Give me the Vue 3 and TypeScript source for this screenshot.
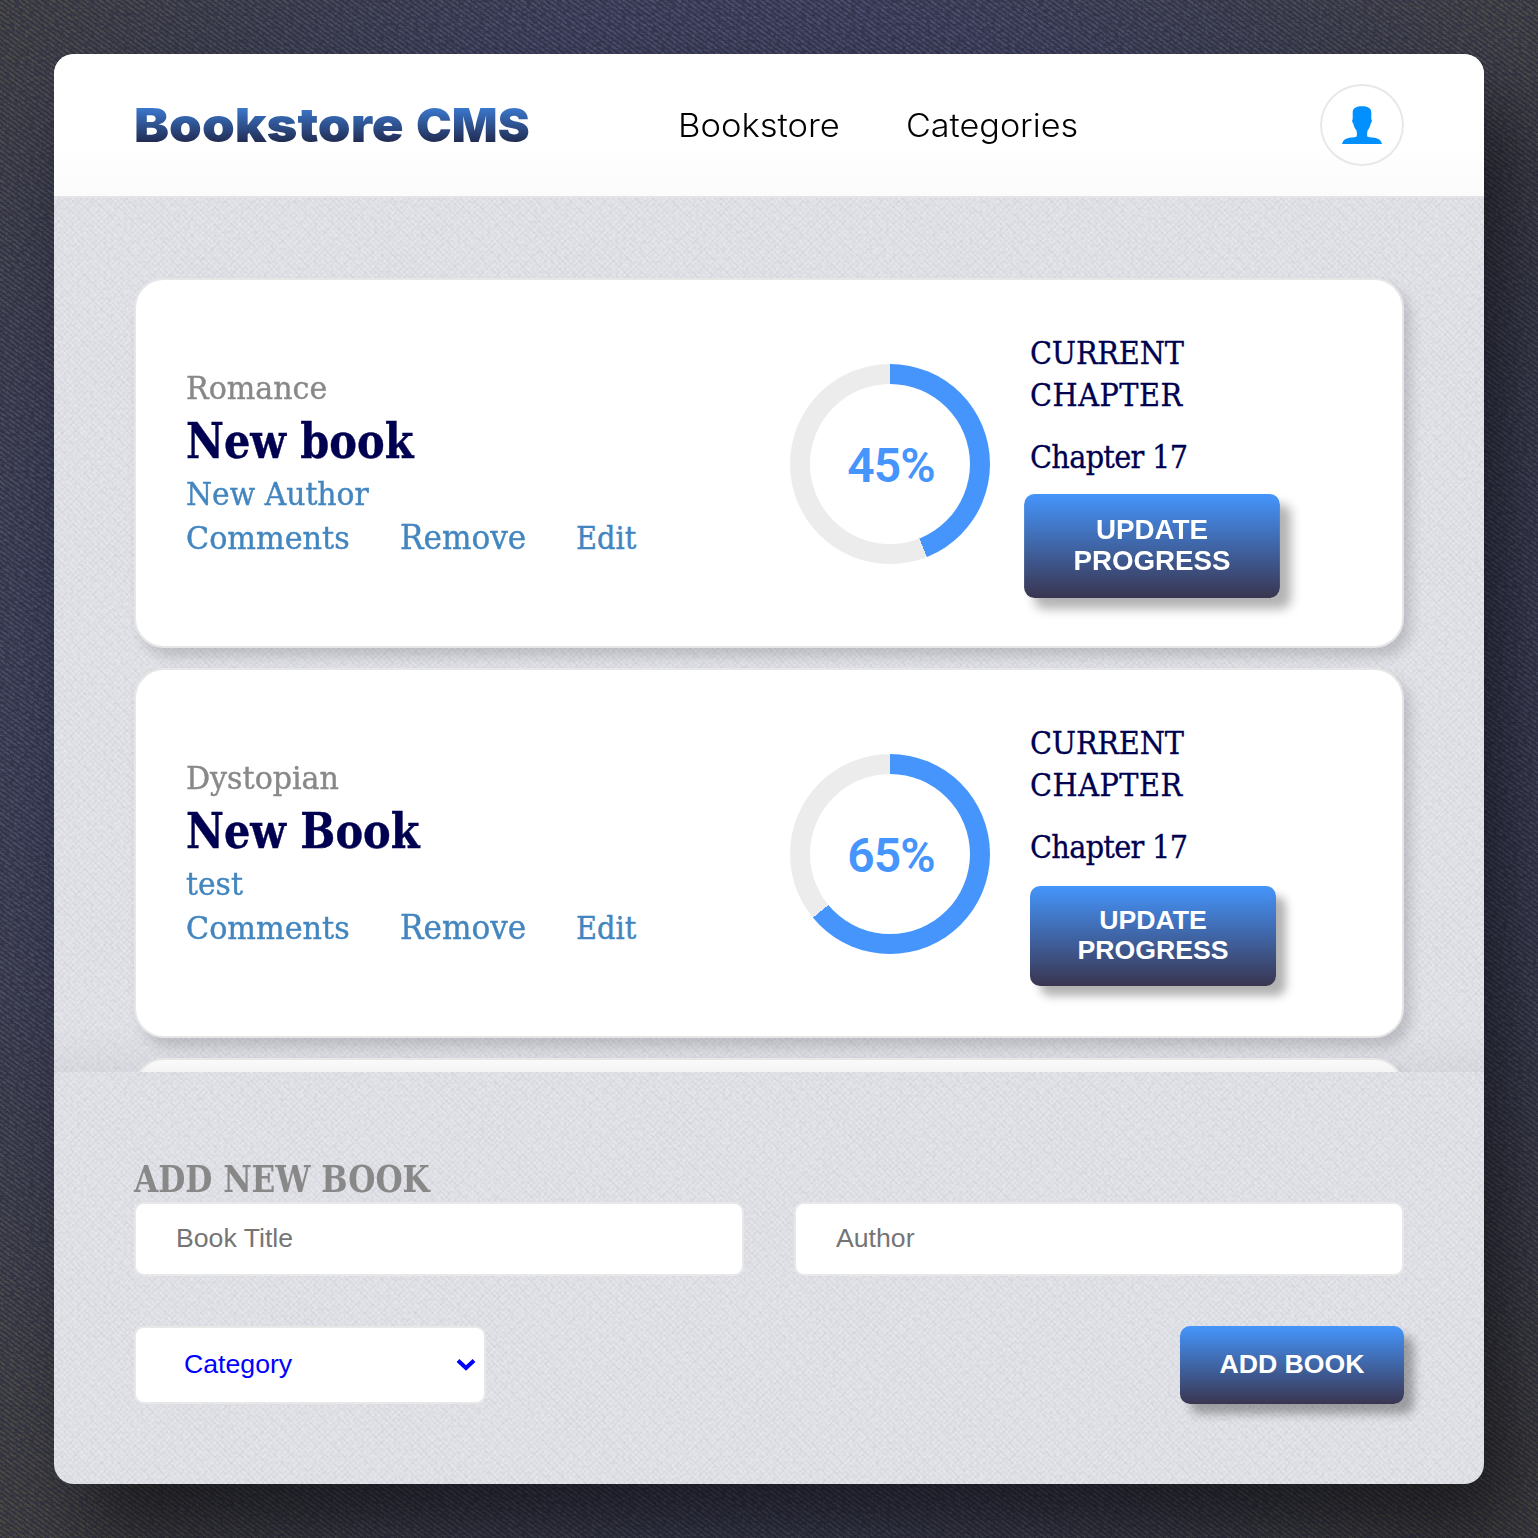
<script setup lang="ts">
interface Book {
  category: string
  title: string
  author: string
  progress: number
  chapter: string
  active: boolean
}

const books: Book[] = [
  { category: 'Romance', title: 'New book', author: 'New Author', progress: 45, chapter: 'Chapter 17', active: true },
  { category: 'Dystopian', title: 'New Book', author: 'test', progress: 65, chapter: 'Chapter 17', active: false },
]

const ring = (progress: number): string =>
  `conic-gradient(#4595fc ${progress - 1}%, #ececec ${progress - 1}%)`
</script>

<template>
  <div class="page">
    <main class="panel">
      <header class="header">
        <h1 class="logo"><span class="logo-name">Bookstore</span> <span class="logo-kind">CMS</span></h1>
        <nav class="nav">
          <a class="link-books">Bookstore</a>
          <a class="link-cats">Categories</a>
        </nav>
        <button class="avatar" aria-label="Profile">
          <svg width="40" height="38" viewBox="0 0 40 38">
            <path
              fill="#0290ff"
              d="M20 .3c5.400 0 9.300 1.600 9.300 6.200v6.700c1 .6.600 3.300-.5 4.100-.5 3-1.600 5.200-3.200 7.300-.5 2.200-.6 4.300-.3 6 2.400 1.300 7 .9 9.800 1.800 2.700.9 4.400 2.800 4.900 5.600H0c.6-2.800 2.200-4.700 4.900-5.600 2.800-.9 7.400-.5 9.800-1.800.3-1.700.3-3.800-.2-6-1.700-2.100-2.800-4.300-3.300-7.300-1.100-.8-1.500-3.500-.5-4.100V6.500C10.700 1.900 14.600.3 20 .3z"
            />
          </svg>
        </button>
      </header>

      <section class="list">
        <article v-for="book in books" :key="book.title" class="card">
          <div class="info">
            <span class="category">{{ book.category }}</span>
            <h2 class="title">{{ book.title }}</h2>
            <span class="author">{{ book.author }}</span>
            <div class="actions">
              <span class="comments">Comments</span>
              <span class="remove">Remove</span>
              <span class="edit">Edit</span>
            </div>
          </div>
          <div class="ring" :style="{ background: ring(book.progress) }">
            <div class="hole"><span>{{ book.progress }}%</span></div>
          </div>
          <div class="chapter">
            <p class="label">CURRENT<br /><span>CHAPTER</span></p>
            <p class="current">{{ book.chapter }}</p>
            <button class="btn update" :class="{ active: book.active }">UPDATE<br />PROGRESS</button>
          </div>
        </article>
        <article class="card"></article>
      </section>

      <section class="form">
        <h3 class="heading"><span>ADD NEW BOOK</span></h3>
        <div class="row">
          <input type="text" placeholder="Book Title" />
          <input type="text" placeholder="Author" />
        </div>
        <div class="row last">
          <div class="select">
            <span>Category</span>
            <svg width="20" height="14" viewBox="0 0 20 14">
              <path d="M2 2.500 10 10l8-7.500" fill="none" stroke="#00f" stroke-width="4" />
            </svg>
          </div>
          <button class="btn add">ADD BOOK</button>
        </div>
      </section>
    </main>
  </div>
</template>

<style>
body {
  margin: 0;
  background: #23242e;
}
</style>

<style scoped>
* {
  box-sizing: border-box;
}

.page {
  width: 1538px;
  height: 1538px;
  padding: 54px;
  overflow: hidden;
  font-family: 'DejaVu Serif Condensed', 'DejaVu Serif', serif;
  font-stretch: condensed;
  background:
    url("data:image/svg+xml,%3Csvg xmlns='http://www.w3.org/2000/svg' width='512' height='512'%3E%3Cfilter id='n'%3E%3CfeTurbulence type='fractalNoise' baseFrequency='.2 .3' numOctaves='2' seed='4' stitchTiles='stitch'/%3E%3CfeColorMatrix values='0 0 0 0 .03 0 0 0 0 .03 0 0 0 0 .06 1.7 0 0 0 -.58'/%3E%3C/filter%3E%3Crect width='512' height='512' filter='url(%23n)'/%3E%3C/svg%3E"),
    repeating-linear-gradient(36deg, rgba(0, 0, 0, 0.2) 0 1.500px, rgba(255, 255, 255, 0.05) 1.500px 4px),
    radial-gradient(circle at 50% 46%, #42466c 0, #424566 62%, #3f4151 76%, #424246 88%, #3f3f3c 100%);
}

.panel {
  display: flex;
  flex-direction: column;
  width: 1430px;
  height: 1430px;
  overflow: hidden;
  border-radius: 20px;
  box-shadow: 30px 50px 80px rgba(0, 0, 0, 0.55);
  background:
    url("data:image/svg+xml,%3Csvg xmlns='http://www.w3.org/2000/svg' width='512' height='512'%3E%3Cfilter id='n'%3E%3CfeTurbulence type='fractalNoise' baseFrequency='.3' numOctaves='2' seed='8' stitchTiles='stitch'/%3E%3CfeColorMatrix values='0 0 0 0 .5 0 0 0 0 .5 0 0 0 0 .54 .6 0 0 0 -.22'/%3E%3C/filter%3E%3Crect width='512' height='512' filter='url(%23n)'/%3E%3C/svg%3E"),
    repeating-linear-gradient(45deg, rgba(120, 120, 140, 0.07) 0 1px, transparent 1px 4px),
    repeating-linear-gradient(-45deg, rgba(120, 120, 140, 0.06) 0 1px, transparent 1px 4px),
    #e5e6eb;
}

.header {
  display: flex;
  align-items: center;
  flex: none;
  height: 144px;
  padding: 0 80px;
  border-bottom: 2px solid #e4e4e5;
  background: linear-gradient(#fff 62%, #fbfbfb);
}

.logo {
  display: flex;
  width: 544px;
  margin: 0;
  font: 900 47px/60px Inter, sans-serif;
}

.logo span {
  transform-origin: left;
  background: linear-gradient(#4595fc, #1d1f3d 88%);
  background-clip: text;
  -webkit-background-clip: text;
  color: transparent;
}

.logo-name {
  width: 282px;
  transform: scaleX(1.117);
}

.logo-kind {
  transform: scaleX(1.02);
}

.nav {
  display: flex;
  flex: 1;
  padding-top: 1px;
  font: 300 32px/40px Inter, sans-serif;
  color: #000;
}

.link-books {
  width: 228px;
  transform: scaleX(1.08);
}

.link-cats {
  transform: scaleX(1.067);
}

.avatar {
  display: flex;
  align-items: center;
  justify-content: center;
  width: 84px;
  height: 82px;
  padding: 0;
  border: 2px solid #e8e8e8;
  border-radius: 50%;
  background: transparent;
}

.list {
  display: flex;
  flex-direction: column;
  gap: 20px;
  flex: none;
  height: 874px;
  padding: 80px 80px 0;
  overflow: hidden;
  background: linear-gradient(transparent 830px, rgba(60, 60, 80, 0.05));
}

.card {
  display: flex;
  align-items: center;
  flex: none;
  height: 370px;
  padding: 0 50px;
  border: 2px solid #e6e6e6;
  border-radius: 30px;
  background: #fff;
  box-shadow: 7px 9px 12px rgba(50, 50, 60, 0.19);
}

.card:last-child {
  background: linear-gradient(#fafafa, #f4f4f5 12px);
}

.info {
  display: flex;
  flex-direction: column;
  align-items: flex-start;
  width: 604px;
  padding-top: 2px;
  font-size: 32px;
  line-height: 42px;
  color: #4386bf;
  -webkit-text-stroke: 0.4px currentColor;
}

.category {
  color: #888;
  transform: scaleX(1.045);
}

.title {
  margin: 0;
  font-size: 48px;
  line-height: 64px;
  color: #000050;
  transform: scaleX(0.96);
}

.author {
  transform: scaleX(1.035);
}

.actions {
  display: flex;
  line-height: 46px;
}

.comments {
  width: 214px;
  transform: scaleX(1.05);
}

.remove {
  width: 176px;
  font-size: 33px;
  transform: scaleX(1.05);
}

.ring {
  display: flex;
  align-items: center;
  justify-content: center;
  width: 200px;
  height: 200px;
  margin-top: 2px;
  border-radius: 50%;
}

.hole {
  display: flex;
  align-items: center;
  justify-content: center;
  width: 160px;
  height: 160px;
  border-radius: 50%;
  background: #fff;
  font: 600 48px Roboto, sans-serif;
  color: #4595fc;
}

.hole span {
  padding: 3px 0 0 2px;
  letter-spacing: -1px;
}

.chapter {
  width: 246px;
  margin-left: 40px;
  padding-top: 2px;
  font-size: 32px;
  line-height: 42px;
  color: #000050;
}

.chapter p {
  margin: 0;
  -webkit-text-stroke: 0.3px currentColor;
}

.label {
  letter-spacing: -0.2px;
}

.label span {
  letter-spacing: 0.5px;
}

.chapter .current {
  margin: 20px 0 18px;
  letter-spacing: -0.7px;
}

.btn {
  border: 0;
  border-radius: 10px;
  padding: 0;
  font: 700 26.670px/30px 'Liberation Sans', Arial, sans-serif;
  color: #fff;
  background: linear-gradient(#4595fc, #3a3550);
  box-shadow: 10px 10px 10px rgba(0, 0, 0, 0.3);
}

.update {
  display: block;
  width: 246px;
  height: 100px;
  padding-bottom: 2px;
}

.update.active {
  transform: scale(1.04);
  transform-origin: 60% 50%;
}

.form {
  flex: 1;
  padding: 88px 80px 0;
}

.heading {
  margin: 0;
  height: 42px;
  font-size: 38px;
  line-height: 38px;
  color: #888;
}

.heading span {
  display: inline-block;
  transform: scaleX(0.912);
}

.heading span,
.nav a,
.category,
.title,
.author,
.comments,
.remove,
.edit {
  transform-origin: left;
  white-space: nowrap;
}

.row {
  display: flex;
  justify-content: space-between;
}

.last {
  margin-top: 50px;
}

input {
  width: 610px;
  height: 74px;
  padding: 0 40px 2px;
  border: 2px solid #e8e8e8;
  border-radius: 10px;
  background: #fff;
  font: 26.670px 'Liberation Sans', Arial, sans-serif;
}

input::placeholder {
  color: #757575;
}

.select {
  display: flex;
  align-items: center;
  justify-content: space-between;
  width: 352px;
  height: 78px;
  padding: 0 8px 1px 48px;
  border: 2px solid #e8e8e8;
  border-radius: 10px;
  background: #fff;
  font: 26.670px 'Liberation Sans', Arial, sans-serif;
  color: #00f;
}

.add {
  width: 224px;
  height: 78px;
  padding-bottom: 2px;
}
</style>
